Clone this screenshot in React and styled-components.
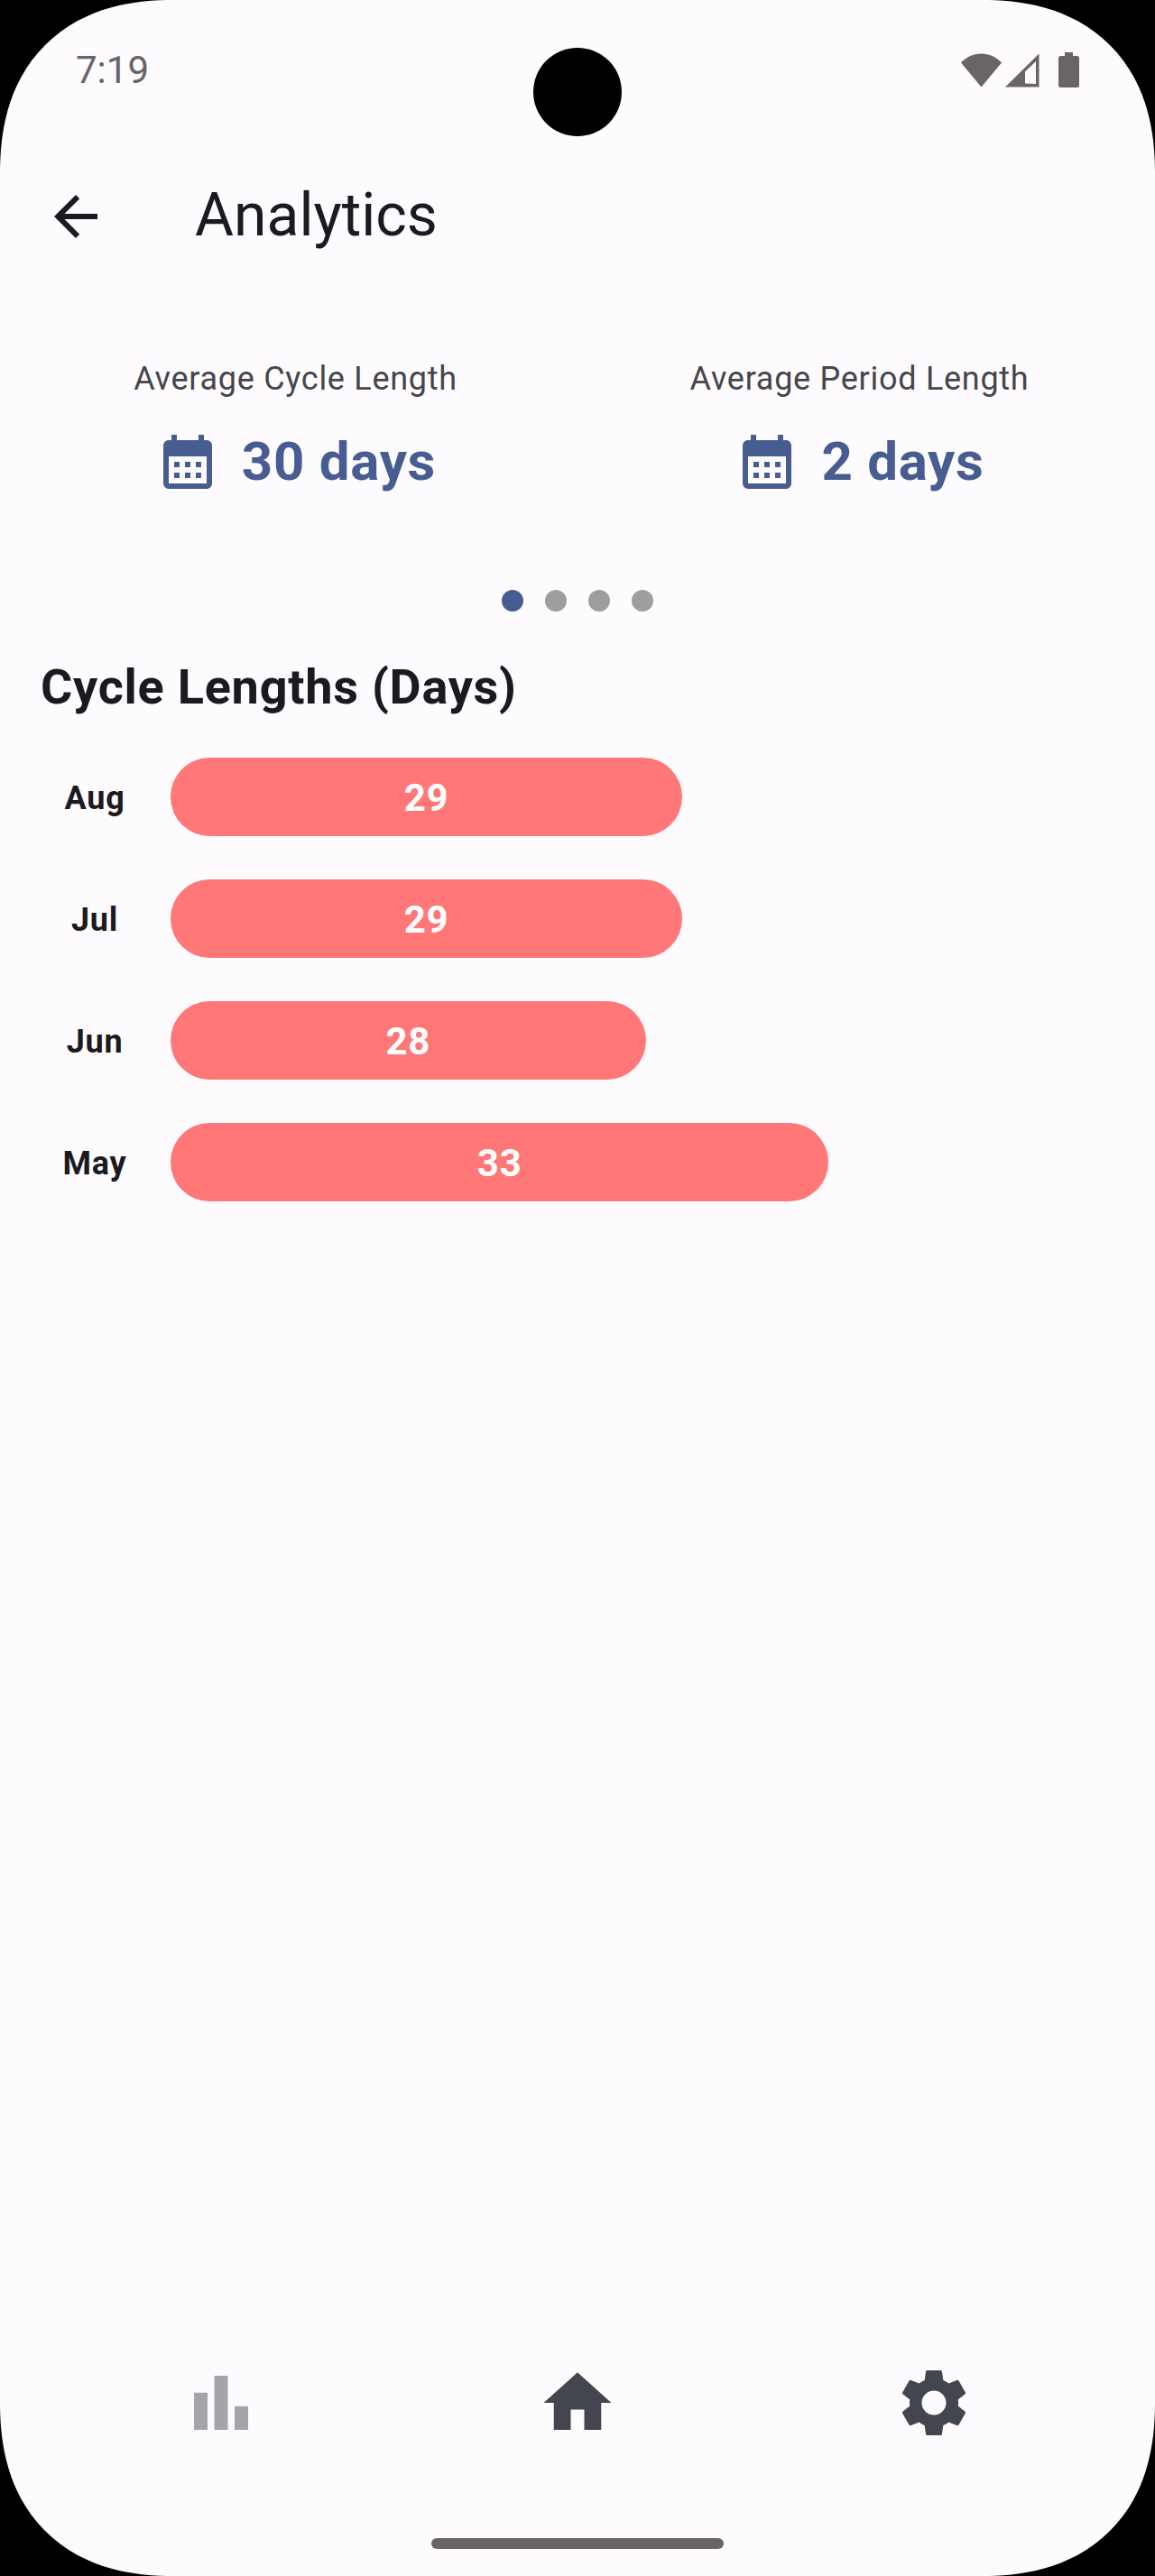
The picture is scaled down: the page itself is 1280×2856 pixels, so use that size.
import React, { useState } from "react";
import styled, { createGlobalStyle } from "styled-components";
import {
  MdArrowBack,
  MdCalendarMonth,
  MdBarChart,
  MdHome,
  MdSettings,
} from "react-icons/md";

const GlobalStyle = createGlobalStyle`
  *, *::before, *::after { box-sizing: border-box; }
  body {
    margin: 0;
    background: #000000;
    font-family: Roboto, "Liberation Sans", sans-serif;
  }
`;

const Screen = styled.div`
  position: relative;
  display: flex;
  flex-direction: column;
  min-height: 100vh;
  background: #fefbff;
  color: #1b1b1f;
  border-radius: 176px;
  overflow: hidden;

  @supports (corner-shape: superellipse(1.2)) {
    border-radius: 192px;
    corner-shape: superellipse(1.2);
  }
`;

const StatusBar = styled.div`
  display: flex;
  justify-content: space-between;
  align-items: flex-start;
  height: 144px;
  padding: 52px 84px 0;
  color: #686468;
`;

const Clock = styled.time`
  font-size: 42px;
  line-height: 52px;
`;

const StatusIcons = styled.div`
  display: flex;
  align-items: center;
  height: 52px;
  gap: 4px;

  svg { display: block; fill: currentColor; }
  svg:last-child { margin-left: 17px; }
`;

const Camera = styled.div`
  position: absolute;
  top: 53px;
  left: 50%;
  width: 98px;
  height: 98px;
  margin-left: -49px;
  border-radius: 50%;
  background: #000000;
`;

const IconButton = styled.button`
  display: flex;
  padding: 0;
  border: 0;
  background: none;
  color: inherit;
  cursor: pointer;
`;

const AppBar = styled.header`
  display: flex;
  align-items: center;
  gap: 96px;
  height: 192px;
  padding: 0 48px;
`;

const Title = styled.h1`
  margin: 0;
  padding-bottom: 2px;
  font-size: 66px;
  line-height: 84px;
  font-weight: 400;
`;

const Stats = styled.section`
  display: grid;
  grid-template-columns: 1fr 1fr;
  padding: 60px 15px 106px;
`;

const Stat = styled.div`
  display: flex;
  flex-direction: column;
  align-items: center;
  gap: 32px;
`;

const StatLabel = styled.span`
  font-size: 36px;
  line-height: 48px;
  letter-spacing: 0.02em;
  color: #46464a;
`;

const StatValue = styled.strong`
  display: flex;
  align-items: center;
  gap: 24px;
  font-size: 60px;
  line-height: 72px;
  font-weight: 700;
  letter-spacing: 0.012em;
  color: #475d92;
`;

const Pager = styled.div`
  display: flex;
  justify-content: center;
  gap: 24px;
`;

const PagerDot = styled.button`
  width: 24px;
  height: 24px;
  padding: 0;
  border: 0;
  border-radius: 50%;
  background: ${(p) => (p.$active ? "#475d92" : "#9e9e9e")};
  cursor: pointer;
`;

const Chart = styled.section`
  flex: 1;
  padding: 48px 78px 48px 45px;
`;

const ChartTitle = styled.h2`
  margin: 0 0 42px;
  font-size: 54px;
  line-height: 72px;
  font-weight: 700;
  letter-spacing: 0.014em;
`;

const BarList = styled.ul`
  display: flex;
  flex-direction: column;
  gap: 48px;
  margin: 0;
  padding: 0;
  list-style: none;
`;

const BarRow = styled.li`
  display: grid;
  grid-template-columns: 120px 1fr;
  align-items: center;
  gap: 24px;
`;

const Month = styled.span`
  padding-top: 2px;
  font-size: 36px;
  line-height: 48px;
  font-weight: 700;
  letter-spacing: 0.02em;
  text-align: center;
`;

const Bar = styled.div`
  display: flex;
  align-items: center;
  justify-content: center;
  height: 87px;
  padding-top: 2px;
  border-radius: 44px;
  background: #ff7777;
  color: #ffffff;
  font-size: 42px;
  line-height: 48px;
  font-weight: 700;
  letter-spacing: 0.018em;
`;

const NavBar = styled.nav`
  display: grid;
  grid-template-columns: repeat(3, 1fr);
  justify-items: center;
  align-items: center;
  height: 240px;
  padding: 0 48px;
`;

const NavButton = styled(IconButton)`
  color: ${(p) => (p.$current ? "#a5a5a9" : "#44464f")};
`;

const GestureArea = styled.div`
  display: flex;
  justify-content: center;
  align-items: center;
  height: 72px;
`;

const GestureHandle = styled.div`
  width: 324px;
  height: 12px;
  border-radius: 6px;
  background: #686468;
`;

const AXIS_MIN = 15;
const AXIS_MAX = 40;

const stats = [
  { label: "Average Cycle Length", value: "30 days" },
  { label: "Average Period Length", value: "2 days" },
];

const cycles = [
  { month: "Aug", days: 29 },
  { month: "Jul", days: 29 },
  { month: "Jun", days: 28 },
  { month: "May", days: 33 },
];

const pages = ["Cycle lengths", "Page 2", "Page 3", "Page 4"];

const tabs = [
  { name: "Analytics", Icon: MdBarChart },
  { name: "Home", Icon: MdHome },
  { name: "Settings", Icon: MdSettings },
];

const barWidth = (days) =>
  `${((days - AXIS_MIN) / (AXIS_MAX - AXIS_MIN)) * 100}%`;

function WifiIcon() {
  return (
    <svg width="45" height="38" viewBox="0 0 45 38" aria-hidden="true">
      <path d="M22.5 37.5 0 10.500C6 4 14 .5 22.500 .5S39 4 45 10.500Z" />
    </svg>
  );
}

function SignalIcon() {
  return (
    <svg width="38" height="38" viewBox="0 0 38 38" aria-hidden="true">
      <path
        fillRule="evenodd"
        d="M0 37.500 37.500 .5V37.500ZM22 20.500V33.500L34 34V9Z"
      />
    </svg>
  );
}

function BatteryIcon() {
  return (
    <svg width="23" height="40" viewBox="0 0 23 40" aria-hidden="true">
      <path d="M7 0h9v4h4.500Q23 4 23 6.500V36.500Q23 39 20.500 39H2.500Q0 39 0 36.500V6.500Q0 4 2.500 4H7Z" />
    </svg>
  );
}

export default function App() {
  const [page, setPage] = useState(0);

  return (
    <>
      <GlobalStyle />
      <Screen>
        <StatusBar>
          <Clock>7:19</Clock>
          <StatusIcons>
            <WifiIcon />
            <SignalIcon />
            <BatteryIcon />
          </StatusIcons>
        </StatusBar>
        <Camera />

        <AppBar>
          <IconButton type="button" aria-label="Back">
            <MdArrowBack size={72} />
          </IconButton>
          <Title>Analytics</Title>
        </AppBar>

        <Stats>
          {stats.map((s) => (
            <Stat key={s.label}>
              <StatLabel>{s.label}</StatLabel>
              <StatValue>
                <MdCalendarMonth size={72} aria-hidden="true" />
                {s.value}
              </StatValue>
            </Stat>
          ))}
        </Stats>

        <Pager>
          {pages.map((name, i) => (
            <PagerDot
              key={name}
              type="button"
              aria-label={name}
              $active={i === page}
              onClick={() => setPage(i)}
            />
          ))}
        </Pager>

        <Chart>
          <ChartTitle>Cycle Lengths (Days)</ChartTitle>
          <BarList>
            {cycles.map((c) => (
              <BarRow key={c.month}>
                <Month>{c.month}</Month>
                <Bar style={{ width: barWidth(c.days) }}>{c.days}</Bar>
              </BarRow>
            ))}
          </BarList>
        </Chart>

        <NavBar>
          {tabs.map(({ name, Icon }) => (
            <NavButton
              key={name}
              type="button"
              aria-label={name}
              $current={name === "Analytics"}
            >
              <Icon size={90} />
            </NavButton>
          ))}
        </NavBar>
        <GestureArea>
          <GestureHandle />
        </GestureArea>
      </Screen>
    </>
  );
}
